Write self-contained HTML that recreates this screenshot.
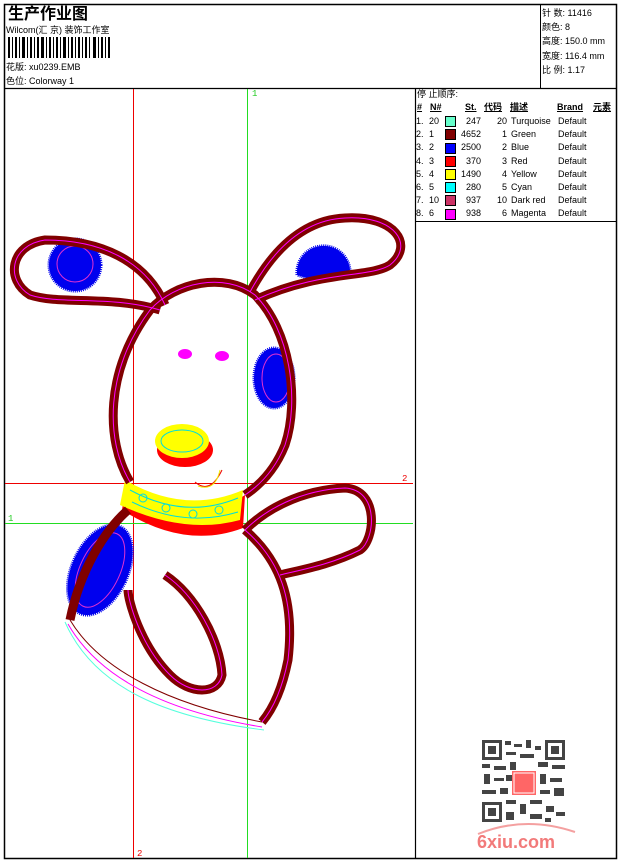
<!DOCTYPE html>
<html><head><meta charset="utf-8">
<style>
html,body{margin:0;padding:0;background:#fff;}
body{width:620px;height:860px;position:relative;overflow:hidden;font-family:"Liberation Sans","Noto Sans CJK SC",sans-serif;color:#000;}
.a{position:absolute;white-space:nowrap;}
.t{font-size:9px;line-height:11px;}
</style></head><body>
<svg width="620" height="860" style="position:absolute;left:0;top:0">
<rect x="4.5" y="4.5" width="612" height="854" fill="none" stroke="#000" stroke-width="1.5"/>
<line x1="4" y1="88.5" x2="617" y2="88.5" stroke="#000" stroke-width="1.2"/>
<line x1="540.5" y1="4" x2="540.5" y2="88" stroke="#000"/>
<line x1="415.5" y1="88" x2="415.5" y2="859" stroke="#000" stroke-width="1.2"/>
<line x1="415" y1="221.5" x2="617" y2="221.5" stroke="#000"/>
<g fill="#000">
<rect x="8" y="37" width="2" height="21"/><rect x="12" y="37" width="1" height="21"/><rect x="15" y="37" width="2" height="21"/><rect x="19" y="37" width="1" height="21"/><rect x="22" y="37" width="3" height="21"/><rect x="27" y="37" width="1" height="21"/><rect x="30" y="37" width="2" height="21"/><rect x="34" y="37" width="1" height="21"/><rect x="37" y="37" width="2" height="21"/><rect x="41" y="37" width="3" height="21"/><rect x="46" y="37" width="1" height="21"/><rect x="49" y="37" width="2" height="21"/><rect x="53" y="37" width="1" height="21"/><rect x="56" y="37" width="2" height="21"/><rect x="60" y="37" width="1" height="21"/><rect x="63" y="37" width="3" height="21"/><rect x="68" y="37" width="1" height="21"/><rect x="71" y="37" width="2" height="21"/><rect x="75" y="37" width="1" height="21"/><rect x="78" y="37" width="2" height="21"/><rect x="82" y="37" width="1" height="21"/><rect x="85" y="37" width="2" height="21"/><rect x="89" y="37" width="1" height="21"/><rect x="93" y="37" width="3" height="21"/><rect x="98" y="37" width="1" height="21"/><rect x="101" y="37" width="2" height="21"/><rect x="105" y="37" width="1" height="21"/><rect x="108" y="37" width="2" height="21"/>
</g>
<line x1="133.5" y1="89" x2="133.5" y2="858" stroke="#e00" stroke-width="1"/>
<line x1="247.5" y1="89" x2="247.5" y2="858" stroke="#2d2" stroke-width="1"/>
<line x1="5" y1="483.5" x2="413" y2="483.5" stroke="#e00" stroke-width="1"/>
<line x1="5" y1="523.5" x2="413" y2="523.5" stroke="#2d2" stroke-width="1"/>
<text x="252" y="96" font-size="9" fill="#2c2" font-family="Liberation Mono">1</text>
<text x="402" y="481" font-size="9" fill="#e00" font-family="Liberation Mono">2</text>
<text x="8" y="521" font-size="9" fill="#2c2" font-family="Liberation Mono">1</text>
<text x="137" y="856" font-size="9" fill="#e00" font-family="Liberation Mono">2</text>
<g fill="#0000ee" stroke="#0000ee" stroke-width="3" stroke-dasharray="1 1">
<circle cx="75" cy="265" r="26"/>
<path d="M297 275 A26 26 0 1 1 350 270 L320 282 Z"/>
<ellipse cx="274" cy="378" rx="20" ry="30"/>
<ellipse cx="100" cy="570" rx="28" ry="48" transform="rotate(25 100 570)"/>
</g>
<g fill="none" stroke="#e030d0" stroke-width="1">
<circle cx="75" cy="264" r="18"/>
<ellipse cx="276" cy="378" rx="14" ry="24"/>
<ellipse cx="100" cy="570" rx="20" ry="40" transform="rotate(25 100 570)"/>
</g>
<ellipse cx="185" cy="450" rx="28" ry="17" fill="#f00"/>
<ellipse cx="182" cy="441" rx="27" ry="17" fill="#ff0"/>
<ellipse cx="182" cy="441" rx="21" ry="11" fill="none" stroke="#0dd" stroke-width="1"/>
<path d="M125 490 Q185 535 245 495 L243 528 Q185 550 122 510 Z" fill="#f00"/>
<path d="M125 480 Q185 515 243 490 L240 520 Q185 535 120 505 Z" fill="#ff0"/>
<path d="M130 490 Q185 520 238 498 M132 502 Q185 528 238 512" fill="none" stroke="#0dd" stroke-width="1"/>
<g fill="none" stroke="#0dd"><circle cx="143" cy="498" r="4"/><circle cx="166" cy="508" r="4"/><circle cx="193" cy="514" r="4"/><circle cx="219" cy="510" r="4"/></g>
<path d="M195 482 Q210 495 222 470" fill="none" stroke="#e00"/>
<path d="M198 486 Q215 492 220 470" fill="none" stroke="#ee0"/>
<ellipse cx="185" cy="354" rx="7" ry="5" fill="#f0f"/>
<ellipse cx="222" cy="356" rx="7" ry="5" fill="#f0f"/>
<g fill="none" stroke="#800000" stroke-width="9" stroke-linecap="butt">
<path d="M130 482 C105 440 105 370 150 310 C175 282 225 272 255 295 C290 330 300 400 285 445 C275 470 260 485 245 495"/>
<path d="M165 305 C145 260 100 240 45 240 C10 245 5 280 30 295 C60 305 110 295 160 310"/>
<path d="M250 292 C270 255 300 220 345 218 C395 215 415 245 390 265 C370 278 320 270 255 300"/>
<path d="M128 510 C105 530 80 570 70 620"/>
<path d="M165 575 C195 595 220 640 222 675 C218 695 190 695 170 675 C140 645 128 600 128 590"/>
<path d="M245 530 C265 510 300 490 345 488 C380 490 375 540 360 550 C330 565 300 570 280 575"/>
<path d="M245 530 C280 560 295 600 288 660 C282 690 272 710 262 722"/>
</g>
<g fill="none" stroke="#f0f" stroke-width="1">
<path d="M130 482 C105 440 105 370 150 310 C175 282 225 272 255 295 C290 330 300 400 285 445 C275 470 260 485 245 495"/>
<path d="M165 305 C145 260 100 240 45 240 C10 245 5 280 30 295 C60 305 110 295 160 310"/>
<path d="M250 292 C270 255 300 220 345 218 C395 215 415 245 390 265 C370 278 320 270 255 300"/>
<path d="M165 575 C195 595 220 640 222 675 C218 695 190 695 170 675 C140 645 128 600 128 590"/>
<path d="M245 530 C265 510 300 490 345 488 C380 490 375 540 360 550 C330 565 300 570 280 575"/>
<path d="M245 530 C280 560 295 600 288 660 C282 690 272 710 262 722"/>
</g>
<path d="M70 620 C100 670 170 705 262 722" fill="none" stroke="#800000" stroke-width="1"/>
<path d="M68 624 C100 680 170 712 262 727" fill="none" stroke="#f0f" stroke-width="1"/>
<path d="M65 622 C95 690 170 718 264 730" fill="none" stroke="#5fd" stroke-width="1"/>
<g fill="#444">
<rect x="482" y="740" width="20" height="20"/><rect x="545" y="740" width="20" height="20"/><rect x="482" y="802" width="20" height="20"/>
</g>
<g fill="#fff"><rect x="485" y="743" width="14" height="14"/><rect x="548" y="743" width="14" height="14"/><rect x="485" y="805" width="14" height="14"/></g>
<g fill="#444"><rect x="488" y="746" width="8" height="8"/><rect x="551" y="746" width="8" height="8"/><rect x="488" y="808" width="8" height="8"/>
<rect x="505" y="741" width="6" height="4"/><rect x="514" y="744" width="8" height="3"/><rect x="526" y="740" width="5" height="8"/><rect x="535" y="746" width="6" height="4"/><rect x="506" y="752" width="10" height="3"/><rect x="520" y="754" width="14" height="4"/>
<rect x="482" y="764" width="8" height="4"/><rect x="494" y="766" width="12" height="4"/><rect x="510" y="762" width="6" height="8"/><rect x="538" y="762" width="10" height="5"/><rect x="552" y="765" width="13" height="4"/>
<rect x="484" y="774" width="6" height="10"/><rect x="494" y="778" width="10" height="3"/><rect x="506" y="775" width="6" height="6"/><rect x="540" y="774" width="6" height="10"/><rect x="550" y="778" width="12" height="4"/>
<rect x="482" y="790" width="14" height="4"/><rect x="500" y="788" width="8" height="6"/><rect x="540" y="790" width="10" height="4"/><rect x="554" y="788" width="10" height="8"/>
<rect x="506" y="800" width="10" height="4"/><rect x="520" y="804" width="6" height="10"/><rect x="530" y="800" width="12" height="4"/><rect x="546" y="806" width="8" height="6"/><rect x="556" y="812" width="9" height="4"/><rect x="506" y="812" width="8" height="8"/><rect x="530" y="814" width="12" height="5"/><rect x="545" y="818" width="6" height="4"/></g>
<rect x="512" y="771" width="24" height="24" fill="#f66"/>
<rect x="514" y="773" width="20" height="20" fill="none" stroke="#fff" stroke-width="1"/>
<path d="M478 834 Q525 815 575 832" fill="none" stroke="#f4a0a0" stroke-width="2"/>
<text x="477" y="848" font-size="18" font-weight="bold" fill="#f27a7a" font-family="Liberation Sans">6xiu.com</text>
</svg>

<div class="a" style="left:8px;top:7px;font-size:16px;font-weight:bold;line-height:16px;">生产作业图</div>
<div class="a t" style="left:6px;top:25px;">Wilcom(汇 京) 装饰工作室</div>
<div class="a t" style="left:6px;top:62px;">花版: xu0239.EMB</div>
<div class="a t" style="left:6px;top:76px;">色位: Colorway 1</div>

<div class="a t" style="left:542px;top:6px;line-height:14.2px;">针 数: 11416<br>颜色: 8<br>高度: 150.0 mm<br>宽度: 116.4 mm<br>比 例: 1.17</div>

<div class="a t" style="left:417px;top:89px;">停 止顺序:</div>
<div class="a t" style="left:417px;top:102px;font-weight:bold;text-decoration:underline;">#</div>
<div class="a t" style="left:430px;top:102px;font-weight:bold;text-decoration:underline;">N#</div>
<div class="a t" style="left:465px;top:102px;font-weight:bold;text-decoration:underline;">St.</div>
<div class="a t" style="left:484px;top:102px;font-weight:bold;text-decoration:underline;">代码</div>
<div class="a t" style="left:510px;top:102px;font-weight:bold;text-decoration:underline;">描述</div>
<div class="a t" style="left:557px;top:102px;font-weight:bold;text-decoration:underline;">Brand</div>
<div class="a t" style="left:593px;top:102px;font-weight:bold;text-decoration:underline;">元素</div>

<div style="position:absolute;left:416px;top:115px;width:200px;font-size:9px;line-height:13.2px;">
<table style="border-collapse:collapse;font-size:9px;">
<tr style="height:13.2px"><td style="width:13px;padding:0">1.</td><td style="width:16px;padding:0">20</td><td style="width:16px;padding:0"><span style="display:inline-block;width:9px;height:9px;background:#6fc;border:1px solid #000;vertical-align:middle"></span></td><td style="width:17px;padding:0;text-align:right">247</td><td style="width:26px;padding:0;text-align:right">20</td><td style="width:47px;padding:0 0 0 4px">Turquoise</td><td style="padding:0">Default</td></tr>
<tr style="height:13.2px"><td style="padding:0">2.</td><td style="padding:0">1</td><td style="padding:0"><span style="display:inline-block;width:9px;height:9px;background:#800000;border:1px solid #000;vertical-align:middle"></span></td><td style="padding:0;text-align:right">4652</td><td style="padding:0;text-align:right">1</td><td style="padding:0 0 0 4px">Green</td><td style="padding:0">Default</td></tr>
<tr style="height:13.2px"><td style="padding:0">3.</td><td style="padding:0">2</td><td style="padding:0"><span style="display:inline-block;width:9px;height:9px;background:#00f;border:1px solid #000;vertical-align:middle"></span></td><td style="padding:0;text-align:right">2500</td><td style="padding:0;text-align:right">2</td><td style="padding:0 0 0 4px">Blue</td><td style="padding:0">Default</td></tr>
<tr style="height:13.2px"><td style="padding:0">4.</td><td style="padding:0">3</td><td style="padding:0"><span style="display:inline-block;width:9px;height:9px;background:#f00;border:1px solid #000;vertical-align:middle"></span></td><td style="padding:0;text-align:right">370</td><td style="padding:0;text-align:right">3</td><td style="padding:0 0 0 4px">Red</td><td style="padding:0">Default</td></tr>
<tr style="height:13.2px"><td style="padding:0">5.</td><td style="padding:0">4</td><td style="padding:0"><span style="display:inline-block;width:9px;height:9px;background:#ff0;border:1px solid #000;vertical-align:middle"></span></td><td style="padding:0;text-align:right">1490</td><td style="padding:0;text-align:right">4</td><td style="padding:0 0 0 4px">Yellow</td><td style="padding:0">Default</td></tr>
<tr style="height:13.2px"><td style="padding:0">6.</td><td style="padding:0">5</td><td style="padding:0"><span style="display:inline-block;width:9px;height:9px;background:#0ff;border:1px solid #000;vertical-align:middle"></span></td><td style="padding:0;text-align:right">280</td><td style="padding:0;text-align:right">5</td><td style="padding:0 0 0 4px">Cyan</td><td style="padding:0">Default</td></tr>
<tr style="height:13.2px"><td style="padding:0">7.</td><td style="padding:0">10</td><td style="padding:0"><span style="display:inline-block;width:9px;height:9px;background:#c36;border:1px solid #000;vertical-align:middle"></span></td><td style="padding:0;text-align:right">937</td><td style="padding:0;text-align:right">10</td><td style="padding:0 0 0 4px">Dark red</td><td style="padding:0">Default</td></tr>
<tr style="height:13.2px"><td style="padding:0">8.</td><td style="padding:0">6</td><td style="padding:0"><span style="display:inline-block;width:9px;height:9px;background:#f0f;border:1px solid #000;vertical-align:middle"></span></td><td style="padding:0;text-align:right">938</td><td style="padding:0;text-align:right">6</td><td style="padding:0 0 0 4px">Magenta</td><td style="padding:0">Default</td></tr>
</table></div>
</body></html>
